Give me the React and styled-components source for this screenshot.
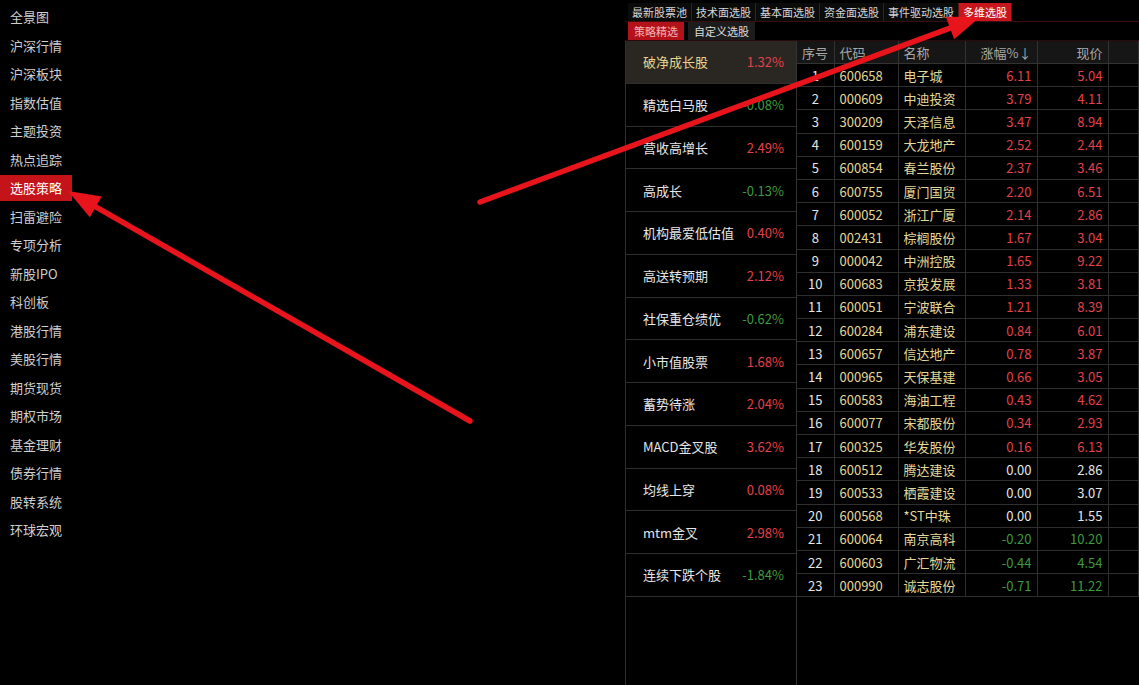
import React from 'react';
import styled, { createGlobalStyle } from 'styled-components';

const GlobalStyle = createGlobalStyle`
  html, body {
    margin: 0;
    padding: 0;
    background: #000;
  }
  body {
    font-family: "Noto Sans CJK SC", "Noto Sans", sans-serif;
  }
`;

const Page = styled.div`
  position: relative;
  width: 1139px;
  height: 685px;
  display: flex;
  overflow: hidden;
  background: #000;
`;

const SideMenu = styled.div`
  width: 625px;
  padding-top: 3px;
  display: flex;
  flex-direction: column;
`;

const MenuItem = styled.div`
  height: 28.5px;
  display: flex;
  align-items: center;
`;

const MenuLabel = styled.span`
  height: 26px;
  line-height: 26px;
  padding: 0 10px;
  font-size: 13px;
  color: ${p => (p.active ? '#fff' : '#cfcfcf')};
  background: ${p => (p.active ? '#c4141a' : 'transparent')};
`;

const Main = styled.div`
  flex: 1;
  display: flex;
  flex-direction: column;
`;

const TabRow = styled.div`
  display: flex;
  height: 18px;
  margin-top: 3px;
  padding-left: 3px;
  border-bottom: 1px solid #3a0e0e;
`;

const Tab = styled.div`
  font-size: 11px;
  line-height: 18px;
  padding: 0 4px;
  border-right: 1px solid #5a1414;
  color: ${p => (p.active ? '#fff' : '#d6d6d6')};
  background: ${p => (p.active ? '#c8161e' : '#0b0b0b')};
`;

const SubTabRow = styled.div`
  display: flex;
  gap: 4px;
  height: 18px;
  padding-left: 3px;
  border-bottom: 1px solid #2a0a0a;
`;

const SubTab = styled.div`
  font-size: 11px;
  line-height: 18px;
  padding: 0 6px;
  color: ${p => (p.active ? '#f3b4b4' : '#dcdcdc')};
  background: ${p => (p.active ? '#b3121a' : '#1c1c1c')};
`;

const Content = styled.div`
  flex: 1;
  display: flex;
  border-left: 1px solid #6a1616;
`;

const StrategyList = styled.div`
  width: 170px;
  border-right: 1px solid #333;
  display: flex;
  flex-direction: column;
`;

const StrategyItem = styled.div`
  box-sizing: border-box;
  height: 42.75px;
  display: flex;
  align-items: center;
  justify-content: space-between;
  padding: 0 12px 0 17px;
  border-bottom: 1px solid #2e2e2e;
  background: ${p => (p.active ? '#2a2723' : 'transparent')};
  font-size: 13px;
`;

const StrategyName = styled.span`
  color: ${p => (p.active ? '#e8d48c' : '#e6e6e6')};
`;

const Change = styled.span`
  color: ${p => p.tone};
`;

const TableWrap = styled.div`
  flex: 1;
`;

const Table = styled.table`
  border-collapse: collapse;
  width: 100%;
  table-layout: fixed;
  font-size: 13px;
`;

const HeadCell = styled.th`
  height: 22px;
  padding: 0 5px;
  font-weight: normal;
  color: #a8a8a8;
  background: #161616;
  text-align: ${p => p.align || 'left'};
  border-right: 1px solid #333;
  border-bottom: 1px solid #333;
  white-space: nowrap;
`;

const Row = styled.tr`
  height: 23.2px;
`;

const Cell = styled.td`
  padding: 0 5px;
  color: ${p => p.tone || '#e6e6e6'};
  text-align: ${p => p.align || 'left'};
  border-right: 1px solid #2f2f2f;
  border-bottom: 1px solid #2f2f2f;
  white-space: nowrap;
`;

const Overlay = styled.svg`
  position: absolute;
  left: 0;
  top: 0;
  pointer-events: none;
`;

const RED = '#e3414b';
const GREEN = '#3e9a3e';
const WHITE = '#e6e6e6';
const GOLD = '#e4d898';

const toneOf = v => (v > 0 ? RED : v < 0 ? GREEN : WHITE);

const menu = [
  '全景图', '沪深行情', '沪深板块', '指数估值', '主题投资', '热点追踪', '选股策略',
  '扫雷避险', '专项分析', '新股IPO', '科创板', '港股行情', '美股行情', '期货现货',
  '期权市场', '基金理财', '债券行情', '股转系统', '环球宏观',
];

const tabs = ['最新股票池', '技术面选股', '基本面选股', '资金面选股', '事件驱动选股', '多维选股'];

const strategies = [
  ['破净成长股', 1.32],
  ['精选白马股', -0.08],
  ['营收高增长', 2.49],
  ['高成长', -0.13],
  ['机构最爱低估值', 0.4],
  ['高送转预期', 2.12],
  ['社保重仓绩优', -0.62],
  ['小市值股票', 1.68],
  ['蓄势待涨', 2.04],
  ['MACD金叉股', 3.62],
  ['均线上穿', 0.08],
  ['mtm金叉', 2.98],
  ['连续下跌个股', -1.84],
];

const stocks = [
  ['600658', '电子城', 6.11, 5.04],
  ['000609', '中迪投资', 3.79, 4.11],
  ['300209', '天泽信息', 3.47, 8.94],
  ['600159', '大龙地产', 2.52, 2.44],
  ['600854', '春兰股份', 2.37, 3.46],
  ['600755', '厦门国贸', 2.2, 6.51],
  ['600052', '浙江广厦', 2.14, 2.86],
  ['002431', '棕榈股份', 1.67, 3.04],
  ['000042', '中洲控股', 1.65, 9.22],
  ['600683', '京投发展', 1.33, 3.81],
  ['600051', '宁波联合', 1.21, 8.39],
  ['600284', '浦东建设', 0.84, 6.01],
  ['600657', '信达地产', 0.78, 3.87],
  ['000965', '天保基建', 0.66, 3.05],
  ['600583', '海油工程', 0.43, 4.62],
  ['600077', '宋都股份', 0.34, 2.93],
  ['600325', '华发股份', 0.16, 6.13],
  ['600512', '腾达建设', 0, 2.86],
  ['600533', '栖霞建设', 0, 3.07],
  ['600568', '*ST中珠', 0, 1.55],
  ['600064', '南京高科', -0.2, 10.2],
  ['600603', '广汇物流', -0.44, 4.54],
  ['000990', '诚志股份', -0.71, 11.22],
];

// arrow from tail to tip with a filled triangular head
function Arrow({ x1, y1, x2, y2 }) {
  const dx = x1 - x2;
  const dy = y1 - y2;
  const len = Math.hypot(dx, dy);
  const ux = dx / len;
  const uy = dy / len;
  const headLen = 32;
  const half = 12;
  const bx = x2 + ux * headLen;
  const by = y2 + uy * headLen;
  const p1 = `${bx - uy * half},${by + ux * half}`;
  const p2 = `${bx + uy * half},${by - ux * half}`;
  return (
    <g>
      <line x1={x1} y1={y1} x2={bx} y2={by} stroke="#e8141c" strokeWidth="5.5" strokeLinecap="round" />
      <polygon points={`${x2},${y2} ${p1} ${p2}`} fill="#e8141c" />
    </g>
  );
}

export default function App() {
  return (
    <Page>
      <GlobalStyle />
      <SideMenu>
        {menu.map(m => (
          <MenuItem key={m}>
            <MenuLabel active={m === '选股策略'}>{m}</MenuLabel>
          </MenuItem>
        ))}
      </SideMenu>

      <Main>
        <TabRow>
          {tabs.map(t => (
            <Tab key={t} active={t === '多维选股'}>{t}</Tab>
          ))}
        </TabRow>
        <SubTabRow>
          <SubTab active>策略精选</SubTab>
          <SubTab>自定义选股</SubTab>
        </SubTabRow>

        <Content>
          <StrategyList>
            {strategies.map(([name, pct], i) => (
              <StrategyItem key={name} active={i === 0}>
                <StrategyName active={i === 0}>{name}</StrategyName>
                <Change tone={toneOf(pct)}>{pct.toFixed(2)}%</Change>
              </StrategyItem>
            ))}
          </StrategyList>

          <TableWrap>
            <Table>
              <colgroup>
                <col style={{ width: 37 }} />
                <col style={{ width: 64 }} />
                <col style={{ width: 67 }} />
                <col style={{ width: 72 }} />
                <col style={{ width: 71 }} />
                <col />
              </colgroup>
              <thead>
                <tr>
                  <HeadCell>序号</HeadCell>
                  <HeadCell>代码</HeadCell>
                  <HeadCell>名称</HeadCell>
                  <HeadCell align="right">涨幅%↓</HeadCell>
                  <HeadCell align="right">现价</HeadCell>
                  <HeadCell />
                </tr>
              </thead>
              <tbody>
                {stocks.map(([code, name, chg, price], i) => (
                  <Row key={code}>
                    <Cell align="center">{i + 1}</Cell>
                    <Cell tone={GOLD}>{code}</Cell>
                    <Cell tone={GOLD}>{name}</Cell>
                    <Cell align="right" tone={toneOf(chg)}>{chg.toFixed(2)}</Cell>
                    <Cell align="right" tone={toneOf(chg)}>{price.toFixed(2)}</Cell>
                    <Cell />
                  </Row>
                ))}
              </tbody>
            </Table>
          </TableWrap>
        </Content>
      </Main>

      <Overlay width="1139" height="685">
        <Arrow x1={470} y1={421} x2={68} y2={191} />
        <Arrow x1={480} y1={202} x2={980} y2={17} />
      </Overlay>
    </Page>
  );
}
